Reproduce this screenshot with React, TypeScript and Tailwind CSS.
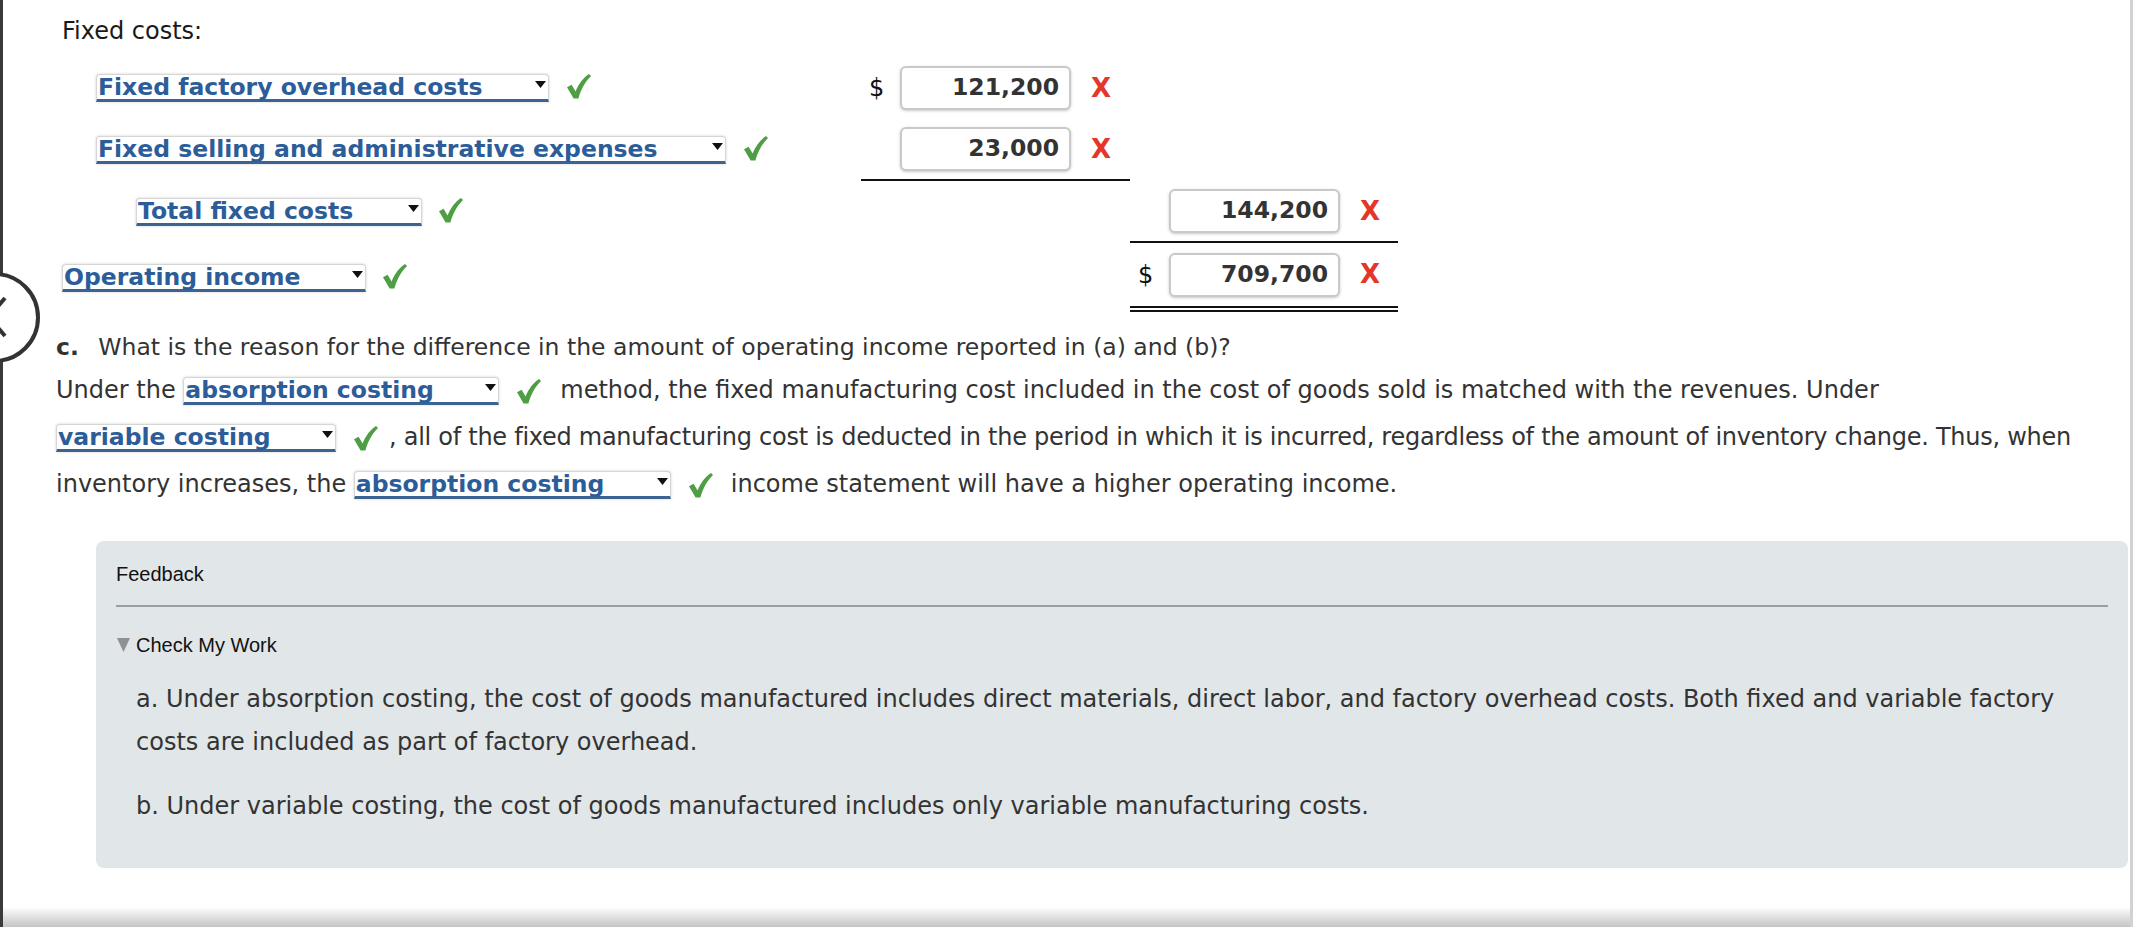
import React from 'react';

const body = "font-['DejaVu_Sans',Verdana,sans-serif]";
const arial = "font-['Liberation_Sans',Arial,sans-serif]";

function Arrow() {
  return (
    <svg width="11" height="7" viewBox="0 0 11 7" className="mt-[6px] shrink-0 self-start">
      <path d="M0 0H11L5.5 7Z" fill="#111" />
    </svg>
  );
}

function Check({ className = '' }: { className?: string }) {
  return (
    <svg width="24" height="25" viewBox="0 0 24 25" className={`inline-block shrink-0 ${className}`}>
      <path d="M0 13.2L4.6 10.8L8.6 17.4C11.6 10 16.2 3.8 22 0L24 2C18.4 7.6 14 15 11.4 24.6H6.6Z" fill="#4f9e45" />
    </svg>
  );
}

function Drop({ label, w }: { label: string; w: string }) {
  return (
    <span className={`inline-flex h-[28px] justify-between rounded-t-[4px] border border-b-[3px] border-[#d6d6d6] border-b-[#3b6492] bg-white pl-px pr-[2px] align-baseline text-[23.5px] font-bold leading-[24px] tracking-normal text-[#2c5d98] shadow-[0_0_3px_rgba(0,0,0,0.18)] ${w}`}>
      <span className="whitespace-nowrap">{label}</span>
      <Arrow />
    </span>
  );
}

function Amount({ v, dollar }: { v: string; dollar?: boolean }) {
  return (
    <div className="flex items-center">
      <span className="w-[39px] pl-[8px] text-[#111]">{dollar ? '$' : ''}</span>
      <div className="flex h-[44px] w-[171px] items-center justify-end rounded-[6px] border-2 border-[#c9c9c9] bg-white pr-[10px] text-[23.5px] font-bold text-[#333] shadow-[0_1px_3px_rgba(0,0,0,0.22)]">
        {v}
      </div>
      <span className="ml-[20px] text-[26px] font-bold text-[#e5362a]">X</span>
    </div>
  );
}

function Label({ indent, children }: { indent: string; children: React.ReactNode }) {
  return (
    <div className={`flex h-[62px] items-center ${indent}`}>
      <span className="flex items-start">{children}</span>
    </div>
  );
}

export default function App() {
  return (
    <div className={`relative h-[934px] w-[2142px] overflow-hidden bg-white text-[24px] text-[#333] ${body}`}>
      <div className="flex h-[927px]">
        <div className="w-[3px] bg-[#3a3a3a]" />
        <div className="flex flex-1 flex-col">
          <div className="grid grid-cols-[799px_269px_268px] pl-[59px]">
            <div className="col-span-3 h-[57px] pt-[18px] leading-[26px] text-[#1a1a1a]">Fixed costs:</div>

            <Label indent="pl-[34px]">
              <Drop label="Fixed factory overhead costs" w="w-[453px]" />
              <Check className="ml-[18px]" />
            </Label>
            <div className="flex h-[62px] items-center"><Amount v="121,200" dollar /></div>
            <div className="h-[62px]" />

            <Label indent="pl-[34px]">
              <Drop label="Fixed selling and administrative expenses" w="w-[630px]" />
              <Check className="ml-[18px]" />
            </Label>
            <div className="flex h-[62px] items-center border-b-2 border-[#111]"><Amount v="23,000" /></div>
            <div className="h-[62px]" />

            <Label indent="pl-[74px]">
              <Drop label="Total fixed costs" w="w-[286px]" />
              <Check className="ml-[17px]" />
            </Label>
            <div className="h-[62px]" />
            <div className="flex h-[62px] items-center border-b-2 border-[#111]"><Amount v="144,200" /></div>

            <div className="flex h-[69px] items-center">
              <span className="flex items-start">
                <Drop label="Operating income" w="w-[304px]" />
                <Check className="ml-[17px]" />
              </span>
            </div>
            <div className="h-[69px]" />
            <div className="flex h-[69px] items-center border-b-[6px] border-double border-[#111]"><Amount v="709,700" dollar /></div>
          </div>

          <div className="pl-[53px]">
            <p className="mt-[15px] text-[23.5px] leading-[40px]">
              <b className="mr-[12px]">c.</b> What is the reason for the difference in the amount of operating income reported in (a) and (b)?
            </p>
            <p className="leading-[47px]">
              Under the <Drop label="absorption costing" w="w-[316px]" />
              <Check className="ml-[18px] mr-[19px]" />method, the fixed manufacturing cost included in the cost of goods sold is matched with the revenues. Under{' '}
              <Drop label="variable costing" w="w-[280px]" />
              <Check className="ml-[18px] mr-[11px]" />
              <span className="tracking-[-0.27px]">, all of the fixed manufacturing cost is deducted in the period in which it is incurred, regardless of the amount of inventory change. Thus, when</span>{' '}
              inventory increases, the{' '}
              <Drop label="absorption costing" w="w-[317px]" />
              <Check className="ml-[18px] mr-[18px]" />income statement will have a higher operating income.
            </p>
          </div>

          <div className="ml-[93px] mr-[2px] mt-[33px] rounded-[8px] bg-[#e1e6e9] px-[20px] pb-[40px] pt-[21px]">
            <div className={`${arial} text-[20px] leading-[24px] text-[#111]`}>Feedback</div>
            <div className="mt-[19px] h-[2px] bg-[#9a9fa3]" />
            <div className={`mt-[26px] flex items-center gap-[6px] ${arial} text-[20px] leading-[24px] text-[#111]`}>
              <svg width="13" height="14" viewBox="0 0 13 14" className="ml-px">
                <path d="M0 0H13L6.5 14Z" fill="#8f9193" />
              </svg>
              Check My Work
            </div>
            <div className="pl-[20px]">
              <p className="mt-[21px] leading-[43px]">
                a. Under absorption costing, the cost of goods manufactured includes direct materials, direct labor, and factory overhead costs. Both fixed and variable factory costs are included as part of factory overhead.
              </p>
              <p className="mt-[21px] leading-[43px]">
                b. Under variable costing, the cost of goods manufactured includes only variable manufacturing costs.
              </p>
            </div>
          </div>

          <div className="flex-1" />
          <div className="h-[20px] bg-gradient-to-b from-white to-[#c4c4c4]" />
        </div>
        <div className="w-[3px] bg-[#d2d2d2]" />
        <div className="w-[9px]" />
      </div>

      <div className="absolute left-[-51px] top-[272px] h-[91px] w-[91px] rounded-full border-[4px] border-[#333] bg-white" />
      <svg className="absolute left-0 top-[296px]" width="8" height="42" viewBox="0 0 8 42">
        <path d="M5 2L-11 21L5 40" stroke="#333" strokeWidth="4" fill="none" />
      </svg>
    </div>
  );
}
